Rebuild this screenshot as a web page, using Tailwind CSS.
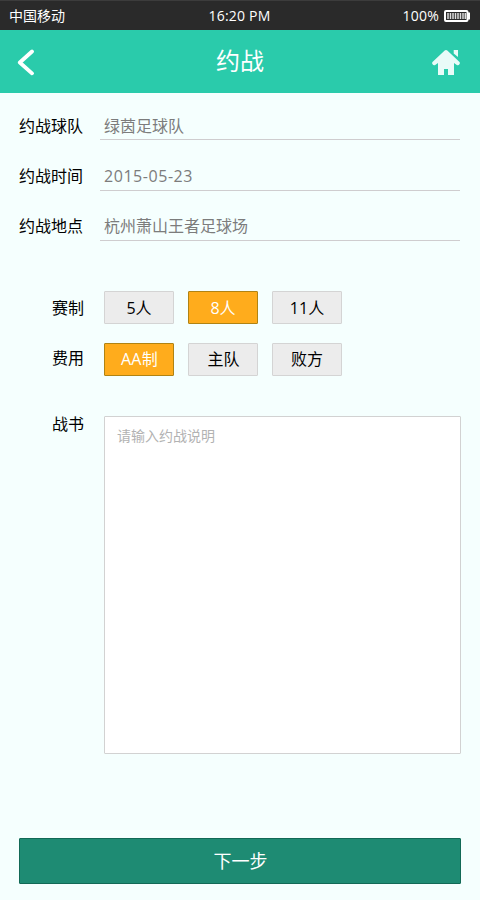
<!DOCTYPE html>
<html lang="zh-CN">
<head>
<meta charset="utf-8">
<title>约战</title>
<script src="https://cdn.jsdelivr.net/npm/@tailwindcss/browser@4"></script>
</head>
<body class="w-[480px] h-[900px] overflow-hidden bg-[#f5fffe] font-['Open_Sans','Noto_Sans_CJK_SC',sans-serif] font-[370] text-base text-black flex flex-col">
  <div class="h-[30px] shrink-0 bg-[#2a2a2a] border-t border-[#3c3c3c] grid grid-cols-3 items-center pl-[9px] pr-[10px] pt-px text-sm leading-5 text-white">
    <span>中国移动</span>
    <span class="text-center tracking-[0.2px]">16:20 PM</span>
    <span class="flex items-center justify-end gap-[5px] tracking-[0.2px]">100%
      <svg class="w-[26px] h-3" viewBox="0 0 26 12" fill="none"><rect x="1" y="1" width="22.500" height="10" rx="1" stroke="#fff" stroke-width="2"/><path d="M25 2.500v7" stroke="#fff" stroke-width="2"/><path d="M4 3v6M6.500 3v6M9 3v6M11.500 3v6M14 3v6M16.500 3v6M19 3v6M21.300 3v6" stroke="#ddd" stroke-width="1.500"/></svg>
    </span>
  </div>
  <header class="h-[63px] shrink-0 bg-[#2acbab] flex items-center justify-between pl-[17px] pr-[19px] text-white">
    <svg class="w-[29px] h-[27px] mt-px" viewBox="0 0 29 27" fill="none" stroke="#fff" stroke-width="3.800" stroke-linecap="round" stroke-linejoin="round"><path d="M15 2.500L2.800 13.500L15 24.300"/></svg>
    <h1 class="text-2xl leading-8 pb-px pl-[3px]">约战</h1>
    <svg class="w-[30px] h-[27px] mt-px" viewBox="0 0 30 27" fill="#e9fbf8"><path d="M15 1Q15.700 1 16.300 1.500L28.500 13Q29.300 14 28.600 15.100Q27.500 16.900 25.800 16.100L23 14V26H17V20H13V26H7V14L4.200 16.100Q2.500 16.900 1.400 15.100Q.7 14 1.500 13L13.700 1.500Q14.300 1 15 1Z"/><path d="M22.700 1H27V8L22.700 4.500Z"/></svg>
  </header>
  <main class="flex flex-col pl-[19px] pr-[19px] pt-5">
    <div class="flex h-[27px] pr-px"><label class="w-[81px] leading-[26px]">约战球队</label><span class="flex-1 pl-1 leading-[26px] border-b border-[#cfcdcf] text-[#7c7c7c]">绿茵足球队</span></div>
    <div class="flex h-[27px] pr-px mt-6"><label class="w-[81px] leading-[25px]">约战时间</label><span class="flex-1 pl-1 leading-[25px] border-b border-[#cfcdcf] text-[#7c7c7c] tracking-[0.550px]">2015-05-23</span></div>
    <div class="flex h-[27px] pr-px mt-[23px]"><label class="w-[81px] leading-[25px]">约战地点</label><span class="flex-1 pl-1 leading-[25px] border-b border-[#cfcdcf] text-[#7c7c7c]">杭州萧山王者足球场</span></div>
    <div class="flex mt-[50px] gap-[14px]">
      <span class="w-[71px] pl-[33px] leading-[35px] h-[33px]">赛制</span>
      <button class="w-[70px] h-[33px] rounded-[1px] border border-[#d4d4d4] bg-[#ececec]">5人</button>
      <button class="w-[70px] h-[33px] rounded-[1px] border border-[#b08313] bg-[#ffac1c] text-white">8人</button>
      <button class="w-[70px] h-[33px] rounded-[1px] border border-[#d4d4d4] bg-[#ececec]">11人</button>
    </div>
    <div class="flex mt-[19px] gap-[14px]">
      <span class="w-[71px] pl-[33px] leading-[31px]">费用</span>
      <button class="w-[70px] h-[33px] rounded-[1px] border border-[#b08313] bg-[#ffac1c] text-white pl-px pb-px tracking-[0.300px]">AA制</button>
      <button class="w-[70px] h-[33px] rounded-[1px] border border-[#d4d4d4] bg-[#ececec] pl-px pb-px">主队</button>
      <button class="w-[70px] h-[33px] rounded-[1px] border border-[#d4d4d4] bg-[#ececec] pb-px">败方</button>
    </div>
    <div class="flex mt-10 gap-[14px]">
      <span class="w-[71px] pl-[33px] leading-4">战书</span>
      <div class="flex-1 h-[338px] bg-white border border-[#d2d2d2] rounded-[1px] px-3 pt-[9px] text-sm leading-5 text-[#b2b2b2]">请输入约战说明</div>
    </div>
    <button class="mt-[84px] h-[46px] rounded-[1px] border border-[#126956] bg-[#1e8b73] text-white text-lg pl-px">下一步</button>
  </main>
</body>
</html>
